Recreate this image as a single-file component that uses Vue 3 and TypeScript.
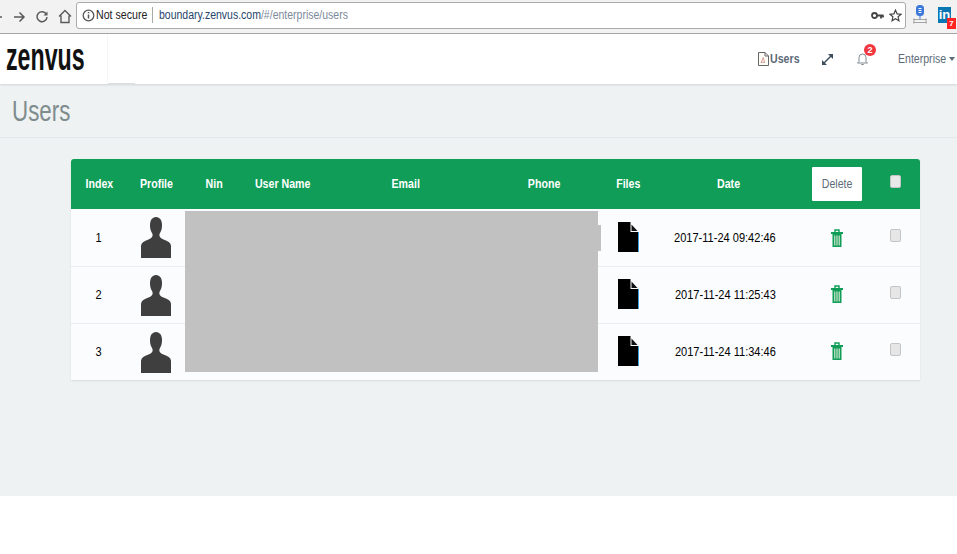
<script setup lang="ts">
interface Row { index: number; date: string }
const rows: Row[] = [
  { index: 1, date: '2017-11-24 09:42:46' },
  { index: 2, date: '2017-11-24 11:25:43' },
  { index: 3, date: '2017-11-24 11:34:46' },
]
const headers = ['Index', 'Profile', 'Nin', 'User Name', 'Email', 'Phone', 'Files', 'Date']
</script>

<template>
  <div class="root">
    <div class="chrome">
      <div class="nav-btns">
        <svg class="back" width="10" height="14" viewBox="0 0 10 14"><path d="M0 7h6" stroke="#5a5a5a" stroke-width="1.6" fill="none" /></svg>
        <svg width="14" height="14" viewBox="0 0 14 14"><path d="M2 7h10M7.500 2.500 12 7l-4.500 4.500" stroke="#5a5a5a" stroke-width="1.500" fill="none" /></svg>
        <svg width="14" height="14" viewBox="0 0 14 14"><path d="M11.500 4.500A5 5 0 1 0 12 7" stroke="#5a5a5a" stroke-width="1.500" fill="none" /><path d="M12.500 1.500v4h-4z" fill="#5a5a5a" /></svg>
        <svg width="14" height="15" viewBox="0 0 14 15"><path d="M1 7.500 7 1.500l6 6M3 6.500V13.500h8V6.500" stroke="#5a5a5a" stroke-width="1.400" fill="none" /></svg>
      </div>
      <div class="omnibox">
        <svg width="13" height="13" viewBox="0 0 13 13"><circle cx="6.500" cy="6.500" r="5.300" stroke="#555" stroke-width="1.300" fill="none" /><path d="M6.500 5.500v4M6.500 3v1.300" stroke="#555" stroke-width="1.500" /></svg>
        <span class="secure sq-left">Not secure</span>
        <span class="sep"></span>
        <span class="url sq-left"><span class="host">boundary.zenvus.com</span>/#/enterprise/users</span>
        <span class="grow"></span>
        <svg class="key" width="13" height="9" viewBox="0 0 13 9"><circle cx="3.500" cy="4.500" r="2.500" stroke="#444" stroke-width="1.800" fill="none" /><path d="M6 4.500h6.500M10 4.500v3M12 4.500v2" stroke="#444" stroke-width="1.800" /></svg>
        <svg class="star" width="13" height="13" viewBox="0 0 14 14"><path d="M7 1.200 8.700 5.200 13 5.600 9.800 8.400 10.700 12.700 7 10.400 3.300 12.700 4.200 8.400 1 5.600 5.300 5.200Z" stroke="#444" stroke-width="1.300" fill="none" /></svg>
      </div>
      <div class="ext">
        <svg width="14" height="19" viewBox="0 0 14 19">
          <rect x="3" y="0" width="8" height="11" rx="3.500" fill="#3b78d8" />
          <path d="M5.500 3.500h3M5.500 5.500h3M5.500 7.500h3" stroke="#fff" stroke-width="1" />
          <path d="M7 11v3" stroke="#3b78d8" />
          <path d="M0 14.500h14M0 17.500h14M1 13.500v5M13 13.500v5" stroke="#a5a5a5" stroke-width="1" />
        </svg>
        <div class="linkedin">
          <span class="in">in</span>
          <span class="seven">7</span>
        </div>
      </div>
    </div>

    <header class="navbar">
      <div class="brand"><span class="brand-text">zenvus</span></div>
      <div class="tab-shadow"></div>
      <div class="nav-right">
        <svg class="users-icon" width="11" height="14" viewBox="0 0 11 14"><path d="M.5.500h6.500l3.500 3.500v9.500H.5zM7 .500V4h3.500" stroke="#666" fill="#fffdf5" /><path d="M3 11 5.200 5.500l1.500 5-3.700-.500" stroke="#c88" stroke-width=".8" fill="none" /></svg>
        <span class="nav-users sq-left">Users</span>
        <svg class="expand" width="11" height="11" viewBox="0 0 11 11"><path d="M2 9 9 2" stroke="#3d4d5c" stroke-width="1.400" /><path d="M6 0H11V5ZM0 6V11H5Z" fill="#3d4d5c" /></svg>
        <span class="bell">
          <svg width="11" height="14" viewBox="0 0 11 14"><path d="M2 9.500V5.500a3.500 3.500 0 0 1 7 0v4l1.500 1.500H.5ZM4.300 12.500h2.400" stroke="#7d8790" fill="none" /></svg>
          <span class="badge">2</span>
        </span>
        <span class="enterprise sq-left">Enterprise</span>
        <i class="caret"></i>
      </div>
    </header>

    <main class="page">
      <div class="title-bar"><h1>Users</h1></div>
      <section class="card">
        <div class="grid head">
          <div v-for="h in headers" :key="h" class="cell"><span class="sq">{{ h }}</span></div>
          <div class="cell"><button class="delete"><span class="sq">Delete</span></button></div>
          <div class="cell"><span class="check head-check"></span></div>
        </div>
        <div v-for="r in rows" :key="r.index" class="grid row">
          <div class="cell"><span class="sq">{{ r.index }}</span></div>
          <div class="cell person">
            <svg width="30" height="41" viewBox="0 0 30 40" preserveAspectRatio="none"><path d="M15 0C19 0 21 3.500 21 8c0 4-1 6-2.500 8.500C18 19 19 20.500 22.500 22 27 23.500 29.500 25 30 28V40H0V28c.5-3 3-4.500 7.500-6C11 20.500 12 19 11.500 16.500 10 14 9 12 9 8 9 3.500 11 0 15 0Z" fill="#3f3f3f" /></svg>
          </div>
          <div class="cell"></div>
          <div class="cell"></div>
          <div class="cell"></div>
          <div class="cell"></div>
          <div class="cell">
            <svg class="file" width="21" height="30" viewBox="0 0 21 30"><path d="M0 0H12.500V10H20V30H0Z" fill="#000" /><path d="M13.500 2.500 19.500 9H13.500Z" fill="#111" /><path d="M20.500 10V30" stroke="#3aa0e0" /></svg>
          </div>
          <div class="cell date"><span class="sq">{{ r.date }}</span></div>
          <div class="cell">
            <svg width="12" height="18" viewBox="0 0 12 18"><path d="M4 3.500V1h4v2.500" fill="none" stroke="#0f9d58" stroke-width="1.400" /><path d="M0 3h12v2H0z" fill="#0f9d58" /><path d="M1.500 5h9v13h-9z" fill="#0f9d58" /><path d="M3.800 6.500v10M6 6.500v10M8.200 6.500v10" stroke="#f4f4e4" stroke-width="1" /></svg>
          </div>
          <div class="cell"><span class="check"></span></div>
        </div>
        <div class="redact"></div>
        <div class="redact-tab"></div>
      </section>
    </main>
    <div class="foot"></div>
  </div>
</template>

<style scoped>
.root { width: 957px; height: 554px; overflow: hidden; background: #fff; font-family: "Liberation Sans", Arial, sans-serif; }
.sq { display: inline-block; white-space: nowrap; transform: scaleX(.85); }
.sq-left { display: inline-block; white-space: nowrap; transform: scaleX(.85); transform-origin: left center; }
.chrome { height: 33px; background: #f2f2f2; border-bottom: 1px solid #a8a8a8; display: flex; align-items: center; }
.nav-btns { width: 80px; display: flex; align-items: center; gap: 9px; margin-left: -4px; flex: none; }
.back { margin-right: -3px; }
.omnibox { width: 830px; height: 27px; flex: none; background: #fff; border: 1px solid #ababab; border-radius: 3px; display: flex; align-items: center; padding: 0 3px 0 5px; box-sizing: border-box; font-size: 12.500px; margin-top: -3px; }
.secure { margin-left: 1px; color: #222; width: 50px; }
.sep { width: 1px; height: 16px; background: #aaa; margin: 0 6px 0 6px; }
.url { color: #7c8a9a; transform: scaleX(.84); }
.host { color: #26456b; }
.grow { flex: 1; }
.key { margin-right: 5px; }
.star { margin-right: 0; }
.ext { display: flex; align-items: center; gap: 11px; margin-left: 7px; margin-top: -4px; }
.linkedin { position: relative; width: 13px; height: 16px; background: #0a77b5; color: #fff; font: bold 13px/16px "Liberation Sans", sans-serif; text-align: center; }
.seven { position: absolute; right: -5px; bottom: -6px; width: 9px; height: 11px; background: #f22; color: #fff; font-size: 8px; line-height: 11px; }
.navbar { height: 50px; background: #fff; box-shadow: 0 1px 2px rgba(0,0,0,.12); display: flex; align-items: center; position: relative; }
.brand { width: 108px; height: 50px; padding-left: 6px; box-sizing: border-box; border-right: 1px solid #f7f7f7; }
.brand-text { display: block; font-size: 38px; font-weight: 700; line-height: 47px; color: #111; transform: scaleX(.61); transform-origin: left center; }
.tab-shadow { position: absolute; left: 108px; top: 49px; width: 27px; height: 2px; background: #dcdfe1; }
.nav-right { margin-left: auto; display: flex; align-items: center; color: #5d6b78; font-size: 12.500px; }
.users-icon { margin-right: 1px; }
.nav-users { font-weight: 700; width: 30px; }
.expand { margin-left: 22px; }
.bell { position: relative; margin-left: 24px; display: flex; }
.badge { position: absolute; left: 7px; top: -8px; width: 12px; height: 12px; border-radius: 50%; background: #f0363f; color: #fff; font-size: 9px; line-height: 12px; font-weight: 700; text-align: center; }
.enterprise { margin-left: 30px; width: 51px; transform: scaleX(.88); font-size: 12px; }
.caret { border: 3.500px solid transparent; border-top: 4px solid #5d6b78; border-bottom: 0; display: block; margin-right: 2px; }
.page { height: 412px; background: #eef2f3; }
.title-bar { height: 54px; border-bottom: 1px solid #e4e8ea; box-sizing: border-box; padding: 10px 0 0 12px; }
.title-bar h1 { margin: 0; font-size: 29px; font-weight: 400; line-height: 34px; color: #7f8c8d; transform: scaleX(.77); transform-origin: left center; }
.card { position: relative; width: 849px; margin: 21px 0 0 71px; background: #fbfcfe; border-radius: 3px 3px 0 0; box-shadow: 0 1px 2px rgba(0,0,0,.1); }
.grid { display: grid; grid-template-columns: 56px 58px 58px 80px 166px 110px 58px 144px 72px 44px 3px; align-items: center; text-align: center; }
.head { height: 50px; background: #0f9d58; color: #fff; font-weight: 700; font-size: 12.500px; border-radius: 3px 3px 0 0; }
.row { height: 57px; font-size: 13px; color: #000; border-bottom: 1px solid #e8edef; box-sizing: border-box; }
.head + .row { height: 58px; }
.row:nth-child(n+3) { padding-bottom: 2px; }
.row:nth-child(4) { height: 56px; border-bottom: 0; }
.cell { display: flex; align-items: center; justify-content: center; }
.person { align-self: start; }
.person svg { display: block; margin-top: 8px; }
.file { margin-top: -1px; }
.date { padding-right: 8px; }
.delete { width: 50px; height: 34px; padding: 0; background: #fff; border: 0; border-radius: 1px; color: #5d6b78; font: 12.500px "Liberation Sans", sans-serif; }
.check { display: block; width: 9px; height: 11px; background: #e6e6e6; border: 1px solid #c4c4c4; border-radius: 2px; margin-top: -4px; }
.head-check { background: #e8e8e8; margin-top: -6px; }
.redact { position: absolute; left: 114px; top: 52px; width: 413px; height: 161px; background: #c1c1c1; }
.redact-tab { position: absolute; left: 527px; top: 66px; width: 3px; height: 26px; background: #c1c1c1; }
.foot { height: 58px; background: #fff; }
</style>
